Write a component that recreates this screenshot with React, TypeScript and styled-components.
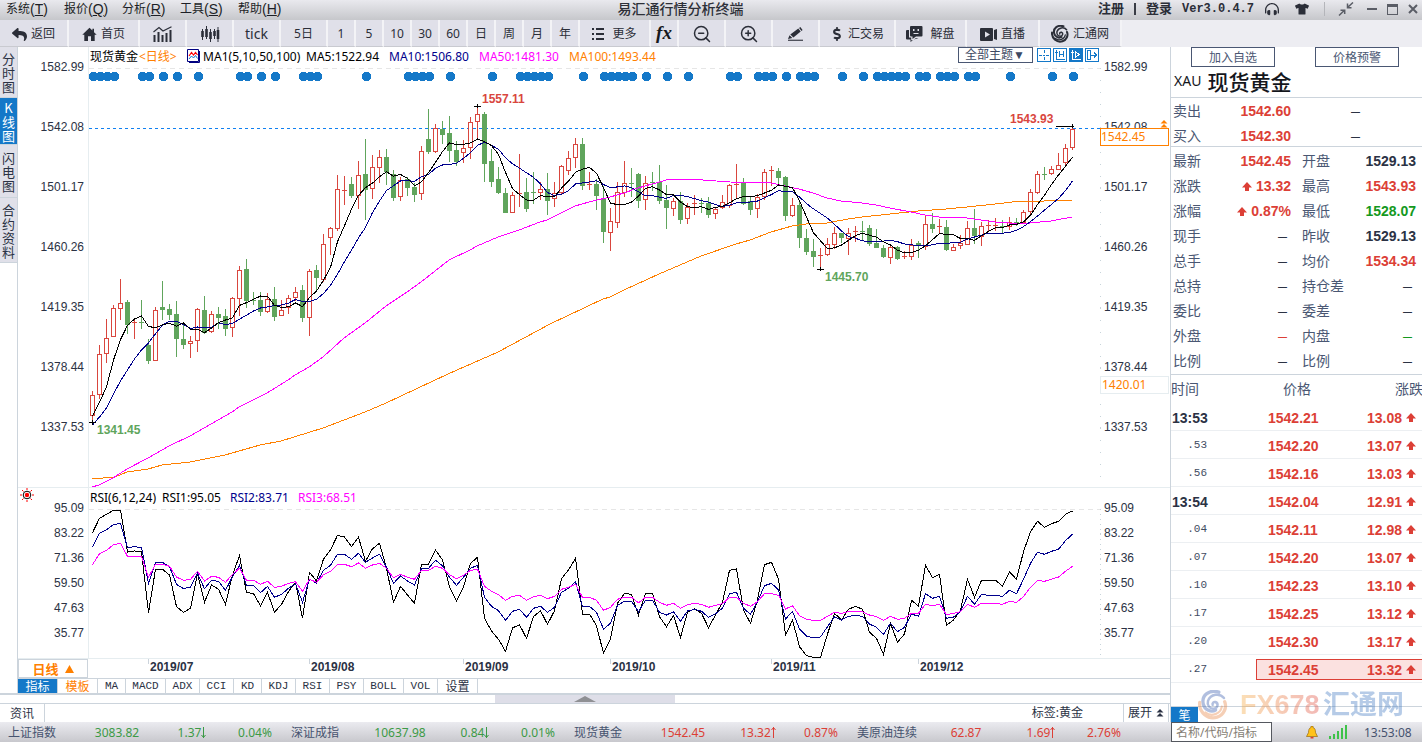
import React from 'react';
import styled, { createGlobalStyle } from 'styled-components';
import { ZoomIn, ZoomOut } from 'lucide-react';
import { FaReply, FaDollarSign, FaHeadphonesAlt, FaTshirt } from 'react-icons/fa';

const c = {
  ink: '#2b3244',
  label: '#4a5773',
  red: '#dc3f36',
  green: '#14991e',
  fall: '#3c9a46',
  blue: '#1478c8',
  orange: '#ff8000',
  line: '#ccd4dc',
  faint: '#e6edf0',
  navy: '#00008c',
  pink: '#ff00ff',
  up: '#d9463e',
  down: '#60a55c',
};

const ui = '"Noto Sans", "Noto Sans CJK SC", sans-serif';
const cjk = '"Noto Sans CJK SC", sans-serif';
const arial = '"Liberation Sans", Arial, "Noto Sans CJK SC", sans-serif';
const mono = '"Liberation Mono", "Noto Sans CJK SC", monospace';

const Global = createGlobalStyle`
  *, *::before, *::after { box-sizing: border-box; }
  body { margin: 0; background: #fff; color: ${c.ink}; font: 12px/16px ${ui}; }
  button, input, select { font: inherit; color: inherit; margin: 0; padding: 0; border: 0; background: none; border-radius: 0; }
  ul, h1, h2, dl, dd, dt { margin: 0; padding: 0; font-weight: inherit; font-size: inherit; list-style: none; }
  svg { display: block; flex: none; }
`;

/* ---------- shell ---------- */
const Shell = styled.div`
  display: flex;
  flex-direction: column;
  min-height: 100vh;
  overflow: hidden;
`;
const Body = styled.div`
  flex: 1;
  display: flex;
`;
const Left = styled.main`
  flex: 1;
  min-width: 0;
  display: flex;
  flex-direction: column;
`;

/* ---------- title bar ---------- */
const TitleBar = styled.header`
  height: 20px;
  padding-bottom: 2px;
  display: flex;
  align-items: center;
  background: linear-gradient(#e9e9ee, #c6c7cb);
`;
const Menu = styled.nav`
  display: flex;
  padding-left: 6px;
`;
const MenuButton = styled.button`
  width: 58px;
  height: 16px;
  display: flex;
  align-items: center;
  color: #1d1f26;
  font: 12px/16px ${arial};
  white-space: nowrap;
  &:last-child { width: 46px; }
`;
const Shortcut = styled.span`
  font-size: 14px;
`;
const Title = styled.h1`
  flex: 1;
  text-align: center;
  font: 500 14px/16px ${arial};
  color: #2d3038;
`;
const Account = styled.div`
  display: flex;
  align-items: center;
  padding-left: 21px;
  color: #2b2e38;
`;
const AccountButton = styled.button`
  font: bold 13px/16px ${arial};
`;
const Bar = styled.span`
  width: 2px;
  height: 12px;
  margin: 0 10px;
  background: #3a3d46;
`;
const Version = styled.span`
  width: 86px;
  padding-left: 10px;
  font: bold 12px/16px ${mono};
`;
const TitleIcon = styled.button<{ $w: number }>`
  width: ${(p) => p.$w}px;
  height: 16px;
  display: flex;
  align-items: center;
  justify-content: center;
`;
const TitleDivider = styled.span`
  width: 1px;
  height: 14px;
  margin: 0 6px;
  background: #b4b5ba;
`;

/* ---------- toolbar ---------- */
const Toolbar = styled.nav`
  height: 27px;
  display: flex;
  background: #ededf2;
`;
const Tool = styled.button<{ $w: number }>`
  width: ${(p) => p.$w}px;
  display: flex;
  align-items: center;
  justify-content: center;
  gap: 4px;
  padding-top: 2px;
  background: #e0e0e9;
  border-right: 2px solid #f3f3f6;
  border-bottom: 1px solid #c9cad0;
  color: #2b2e38;
  font: 12px/16px ${ui};
`;
const TickLabel = styled.span`
  font-size: 14px;
`;
const Formula = styled.i`
  padding-bottom: 2px;
  font: italic bold 19px/20px "Liberation Serif", serif;
  color: #16181d;
`;

/* ---------- side tabs ---------- */
const Work = styled.div`
  flex: 1;
  display: flex;
`;
const SideTabs = styled.nav`
  width: 18px;
  border-right: 1px solid ${c.line};
`;
const SideTab = styled.button<{ $active?: boolean; $pad: number }>`
  display: block;
  width: 17px;
  padding: ${(p) => p.$pad}px 2px ${(p) => p.$pad - 2}px;
  font: 13px/14px ${cjk};
  color: ${(p) => (p.$active ? '#fff' : c.ink)};
  background: ${(p) => (p.$active ? c.blue : '#e0e0e9')};
  border-bottom: 1px solid ${c.line};
`;
const Charts = styled.section`
  flex: 1;
  min-width: 0;
`;

/* ---------- chart panels ---------- */
const Panel = styled.div<{ $h: number }>`
  display: grid;
  grid-template-columns: 70px minmax(0, 1fr) 69px;
  height: ${(p) => p.$h}px;
  border-bottom: 1px solid ${c.faint};
`;
const Plot = styled.div`
  min-width: 0;
  overflow: hidden;
  border-left: 1px solid ${c.faint};
`;
const Legend = styled.div`
  height: 18px;
  display: flex;
  align-items: center;
  padding-left: 1px;
  white-space: nowrap;
  color: #000;
`;
const LegendItem = styled.span<{ $w?: number; $color?: string }>`
  width: ${(p) => (p.$w ? p.$w + 'px' : 'auto')};
  padding-top: 2px;
  color: ${(p) => p.$color || '#000'};
`;
const LegendTools = styled.div`
  margin-left: auto;
  padding-right: 2px;
  align-self: flex-start;
  display: flex;
  align-items: center;
  gap: 2px;
`;
const ThemeSelect = styled.select`
  appearance: none;
  width: 75px;
  height: 16px;
  margin-right: 2px;
  padding-left: 6px;
  border: 1px solid #4a5773;
  color: #3d4963;
  font: 12px/14px ${arial};
`;
const MiniButton = styled.button<{ $on?: boolean }>`
  width: 14px;
  height: 14px;
  border: 1px solid ${c.blue};
  background: ${(p) => (p.$on ? c.blue : '#fff')};
  color: ${(p) => (p.$on ? '#fff' : c.blue)};
`;
const AxisColumn = styled.div`
  position: relative;
`;
const PriceAxis = styled.ul<{ $right?: boolean }>`
  padding: 10px 4px 0 3px;
  display: flex;
  flex-direction: column;
  gap: 40px;
  font: 12px/20px ${arial};
  text-align: ${(p) => (p.$right ? 'left' : 'right')};
`;
const RsiAxis = styled.ul<{ $right?: boolean }>`
  padding: ${(p) => (p.$right ? 14 : 0)}px 4px 0 3px;
  display: flex;
  flex-direction: column;
  gap: 13px;
  font: 12px/12px ${arial};
  text-align: ${(p) => (p.$right ? 'left' : 'right')};
`;
const AlertIcon = styled.button`
  display: flex;
  height: 14px;
  padding-left: 2px;
`;
const PriceTag = styled.output<{ $top: number; $strong?: boolean }>`
  position: absolute;
  left: -1px;
  right: 1px;
  top: ${(p) => p.$top}px;
  height: 18px;
  padding-left: ${(p) => (p.$strong ? 0 : 1)}px;
  line-height: 16px;
  color: ${c.orange};
  background: #fff;
  border: 1px solid ${(p) => (p.$strong ? c.orange : c.faint)};
`;
const RiseMark = styled.span`
  position: absolute;
  right: 2px;
  top: 73px;
`;

/* ---------- date axis and indicator tabs ---------- */
const DateRow = styled.div`
  display: flex;
  height: 19px;
`;
const PeriodButton = styled.button`
  width: 70px;
  display: flex;
  align-items: center;
  justify-content: center;
  gap: 6px;
  border: 1px solid ${c.line};
  color: ${c.orange};
  font: bold 13px/17px ${cjk};
`;
const Indicators = styled.nav`
  display: flex;
  height: 15px;
  border-top: 1px solid ${c.line};
`;
const Indicator = styled.button<{ $w: number; $tone?: 'on' | 'hot' }>`
  width: ${(p) => p.$w}px;
  border-right: 1px solid ${c.line};
  font: 11px/14px ${mono};
  color: ${(p) => (p.$tone === 'on' ? '#fff' : p.$tone === 'hot' ? c.orange : c.ink)};
  background: ${(p) => (p.$tone === 'on' ? c.blue : '#fff')};
`;
const Han = styled.span`
  font: 12px/14px ${cjk};
`;

/* ---------- splitter and news row ---------- */
const Splitter = styled.div`
  height: 11px;
  border-top: 2px solid ${c.line};
  border-bottom: 1px solid ${c.line};
  display: flex;
  justify-content: center;
`;
const Handle = styled.button`
  width: 180px;
  display: flex;
  justify-content: center;
  align-items: center;
  background: #dedee8;
`;
const News = styled.div`
  height: 18px;
  display: flex;
  align-items: stretch;
`;
const NewsTab = styled.button`
  width: 45px;
  border-right: 1px solid ${c.line};
  font: 12px/16px ${cjk};
`;
const NewsTag = styled.span`
  margin-left: auto;
  padding-right: 40px;
  line-height: 18px;
`;
const Expand = styled.button`
  width: 46px;
  margin-right: 1px;
  display: flex;
  align-items: center;
  justify-content: center;
  gap: 4px;
  border-left: 1px solid ${c.line};
  border-right: 1px solid ${c.line};
`;

/* ---------- quote panel ---------- */
const Quote = styled.aside`
  position: relative;
  width: 252px;
  display: flex;
  flex-direction: column;
  overflow-x: clip;
  border-left: 1px solid ${c.line};
`;
const QuoteActions = styled.div`
  display: flex;
  gap: 40px;
  padding-left: 20px;
`;
const QuoteAction = styled.button`
  width: 84px;
  height: 20px;
  border: 1px solid ${c.label};
  color: ${c.label};
  font: 12px/16px ${cjk};
`;
const Instrument = styled.h2`
  height: 31px;
  display: flex;
  align-items: center;
  gap: 6px;
  padding: 0 0 2px 3px;
  border-bottom: 1px solid ${c.line};
  color: #14161c;
  font: 14px/28px ${ui};
`;
const InstrumentName = styled.span`
  font: 500 21px/28px ${cjk};
`;
const Facts = styled.dl<{ $h: number; $pad: number }>`
  height: ${(p) => p.$h}px;
  padding-top: ${(p) => p.$pad}px;
  border-bottom: 1px solid ${c.line};
`;
const FactRow = styled.div`
  display: grid;
  grid-template-columns: 45px 73px 42px 1fr;
  height: 25px;
  padding: 0 6px 0 2px;
  align-items: center;
  font: 14px/25px ${cjk};
  color: ${c.label};
`;
const FactLabel = styled.dt<{ $second?: boolean }>`
  padding-left: ${(p) => (p.$second ? 11 : 0)}px;
  white-space: nowrap;
`;
const FactValue = styled.dd<{ $color?: string }>`
  display: flex;
  align-items: center;
  justify-content: flex-end;
  gap: 4px;
  padding-top: 2px;
  color: ${(p) => p.$color || c.ink};
  font: bold 14px/23px ${arial};
`;
const Dash = styled.span`
  padding-right: 4px;
  font: bold 9px/20px ${arial};
`;
const MidDash = styled(FactValue)`
  grid-column: 4;
  padding-right: 52px;
`;

const Ticks = styled.table`
  width: 251px;
  table-layout: fixed;
  border-collapse: separate;
  border-spacing: 0;
`;
const TickHead = styled.th<{ $w: number; $pad: number }>`
  width: ${(p) => p.$w}px;
  height: 28px;
  padding: 0 0 2px ${(p) => p.$pad}px;
  font: 14px/26px ${cjk};
  color: ${c.label};
  text-align: left;
  white-space: nowrap;
`;
const TickCell = styled.td`
  height: 28px;
  padding: 0;
  border-bottom: 1px solid #eceff2;
`;
const TickTime = styled.span<{ $main: boolean }>`
  display: block;
  width: 36px;
  padding-left: 1px;
  margin-top: ${(p) => (p.$main ? 2 : 0)}px;
  font: ${(p) => (p.$main ? `bold 14px/20px ${arial}` : `11px/24px ${mono}`)};
  text-align: ${(p) => (p.$main ? 'left' : 'right')};
  color: ${(p) => (p.$main ? c.ink : '#3f4c62')};
`;
const TickValue = styled.span<{ $hot?: boolean; $side: 'l' | 'r' }>`
  display: flex;
  align-items: center;
  justify-content: ${(p) => (p.$side === 'l' ? 'flex-start' : 'flex-end')};
  gap: 4px;
  height: 21px;
  margin-top: 1px;
  padding: ${(p) => (p.$side === 'l' ? '2px 0 0 11px' : '2px 6px 0 0')};
  border: solid ${(p) => (p.$hot ? c.red : 'transparent')};
  border-width: 1px 0 1px ${(p) => (p.$side === 'l' ? 1 : 0)}px;
  background: ${(p) => (p.$hot ? '#fbe1e0' : 'transparent')};
  color: ${c.red};
  font: bold 14px/18px ${arial};
`;
const QuoteFoot = styled.div`
  height: 16px;
  margin-top: auto;
  border-top: 1px solid ${c.line};
`;
const PenTab = styled.button`
  display: block;
  width: 27px;
  height: 15px;
  background: ${c.blue};
  color: #fff;
  font: 12px/15px ${cjk};
`;
const Watermark = styled.div`
  position: absolute;
  left: 27px;
  bottom: 1px;
  display: flex;
  align-items: center;
  height: 32px;
  opacity: 0.4;
`;
const MarkLatin = styled.span`
  width: 83px;
  margin-left: 12px;
  font: bold 27px/32px ${arial};
  color: transparent;
  background: linear-gradient(90deg, #f7b04a, #e0504a);
  background-clip: text;
`;
const MarkHan = styled.span`
  font: bold 27px/32px ${arial};
  color: #4a80c4;
`;

/* ---------- status bar ---------- */
const Status = styled.footer`
  height: 20px;
  display: flex;
  align-items: center;
  padding-left: 8px;
  background: linear-gradient(#ebebf0, #c8c8cd);
`;
const Index = styled.div`
  display: grid;
  grid-template-columns: 70px 78px 72px 54px;
  width: 283px;
  padding-top: 1px;
  white-space: nowrap;
`;
const IndexName = styled.span`
  color: #46536f;
`;
const IndexValue = styled.span<{ $up: boolean }>`
  display: flex;
  align-items: center;
  justify-content: center;
  color: ${(p) => (p.$up ? c.red : c.fall)};
`;
const Search = styled.input`
  width: 101px;
  height: 20px;
  margin-left: auto;
  padding: 0 4px;
  background: #fff;
  border: 1px solid #55585f;
  &::placeholder { color: #857e74; opacity: 1; }
`;
const StatusTail = styled.div`
  width: 150px;
  display: flex;
  align-items: center;
  padding-left: 34px;
`;
const Clock = styled.time`
  margin-left: 17px;
  padding-top: 1px;
  color: #46536f;
`;
const Signal = styled.span`
  margin-left: 11px;
`;

/* ---------- icons ---------- */
const UpArrow = () => (
  <svg width="10" height="10" viewBox="0 0 10 10">
    <path d="M5 0 10 5.4H7V9H3V5.4H0Z" fill={c.red} />
  </svg>
);
const HomeIcon = () => (
  <svg width="15" height="15" viewBox="0 0 15 15" fill="#2b2e38">
    <path d="M7.500.8.3 7.800H2.300V14H6V9.300H9V14H12.700V7.800H14.700L12 5.200V1.800H10.400V3.600Z" />
  </svg>
);
const TrendIcon = () => (
  <svg width="20" height="17" viewBox="0 0 20 17">
    <path d="M1.500 16V9M5.500 16V6M9.500 16V9M13.500 16V7M17.500 16V4" stroke="#2b2e38" strokeWidth="2" />
    <path d="M0.500 6 6 1.500 10 5 18.500.8" fill="none" stroke="#2b2e38" strokeWidth="1.200" />
  </svg>
);
const CandleIcon = () => (
  <svg width="20" height="17" viewBox="0 0 20 17" stroke="#2b2e38">
    <path d="M2.500 3V14M6.500 0V13M10.500 3V16M14.500 3V13M18 1V16" strokeWidth="1" />
    <path d="M2.500 5V11M6.500 3V11M10.500 6V13M14.500 5V10M18 4V13" strokeWidth="2.600" />
  </svg>
);
const MoreIcon = () => (
  <svg width="13" height="12" viewBox="0 0 13 12" fill="#2b2e38">
    <path d="M0 0H2V2H0ZM4 0H12V2H4ZM0 5H2V7H0ZM4 5H12V7H4ZM0 10H2V12H0ZM4 10H12V12H4Z" />
  </svg>
);
const PencilIcon = () => (
  <svg width="17" height="15" viewBox="0 0 17 15" fill="#2b2e38">
    <path d="M1 12 2.500 8.300 5.400 11ZM3.300 7.600 11.300 1.500 13.700 4.500 6.400 10.500ZM12.100.9 13.300.1 15.600 3 14.500 3.900Z" />
    <path d="M1 12.700H16V13.800H1Z" />
  </svg>
);
const ChatIcon = () => (
  <svg width="17" height="16" viewBox="0 0 17 16" fill="#2b2e38">
    <path d="M5 0H15.500Q16.500 0 16.500 1V9.500Q16.500 10.500 15.500 10.500H10L6.500 13V10.500H5Q4 10.500 4 9.500V1Q4 0 5 0Z" />
    <path d="M1 4H3V11.500H5.200V14.200H7L10 12H12.500L8 13.500 4.500 16V13.500H1Q0 13.500 0 12.500V5Q0 4 1 4Z" />
    <path d="M7 3H8.500V5H7ZM11.500 3H13V5H11.500ZM7.500 7H12.500V8H7.500Z" fill="#e0e0e9" />
  </svg>
);
const LiveIcon = () => (
  <svg width="17" height="13" viewBox="0 0 17 13">
    <path d="M1 0H12Q13 0 13 1V12Q13 13 12 13H1Q0 13 0 12V1Q0 0 1 0ZM14 2 17 1V12L14 11Z" fill="#2b2e38" />
    <path d="M5 3.500 10 6.500 5 9.500Z" fill="#e0e0e9" />
  </svg>
);
const SwirlIcon = ({ size = 18, a = '#2b2e38', b = '#2b2e38' }: { size?: number; a?: string; b?: string }) => (
  <svg width={size} height={size} viewBox="0 0 18 18" fill="none" strokeLinecap="round">
    <path d="M12.500 1.300C7 -.5 1.800 3 3.200 8.600 4 12 8 13.600 10.500 12" stroke={b} strokeWidth="2" />
    <path d="M1 7.500C.5 13.500 6 18 11.500 16.300 15.500 15 17.500 10.500 16 7" stroke={a} strokeWidth="2" />
    <path d="M15.600 4.800C13 1.500 7.500 2.500 6 6.500 5.300 9 7 11.300 9.300 11.300 12 11 12.500 8 10.500 7.200 9.400 6.900 8.400 7.800 8.800 8.900" stroke={b} strokeWidth="1.500" />
    <path d="M4.500 13.500C8 16.300 13.500 14.500 14.300 10" stroke={a} strokeWidth="1.300" />
  </svg>
);
const ShrinkIcon = () => (
  <svg width="16" height="14" viewBox="0 0 16 14" fill="none" stroke="#5a5d66" strokeWidth="1.500">
    <path d="M15 .5 9.500 5.500M9.500 1.500V5.700H13.500M1 13.500 6.500 8.300M2.500 8.200H6.700V12" />
  </svg>
);
const ChartBadge = () => (
  <svg width="13" height="14" viewBox="0 0 13 14" fill="none">
    <path d="M.5.500H11.500V12.500H.5Z" fill="#fff" stroke="#000080" />
    <path d="M12.500 2V13.500H2" stroke="#000080" />
    <path d="M2 7 4.500 3.500 6.500 6 8.500 3.500 10.500 6" stroke="#f00" strokeWidth="1.200" />
    <path d="M2 10 4.500 7 6.500 9 8.500 6.500 10.500 9.500" stroke="#1478c8" />
  </svg>
);
const SunIcon = () => (
  <svg width="14" height="14" viewBox="0 0 14 14">
    <circle cx="7" cy="7" r="3.800" fill="#fff" stroke="#000" strokeWidth="1" />
    <circle cx="7" cy="7" r="2.200" fill="#f00" />
    <path d="M7 0V2M7 12V14M0 7H2M12 7H14M2 2 3.500 3.500M10.500 10.500 12 12M12 2 10.500 3.500M2 12 3.500 10.500" stroke="#f00" />
  </svg>
);
const DoubleUp = ({ color }: { color: string }) => (
  <svg width="8" height="8" viewBox="0 0 8 8" fill={color}>
    <path d="M4 0 7.500 3.500H.5ZM4 4 7.500 7.500H.5Z" />
  </svg>
);
const Mini = ({ d }: { d: string }) => (
  <svg width="12" height="12" viewBox="0 0 12 12" fill="none" stroke="currentColor" shapeRendering="crispEdges">
    <path d={d} />
  </svg>
);
const Bell = () => (
  <svg width="12" height="13" viewBox="0 0 12 13">
    <path d="M5 0H7V1.500C9 2 9.500 4 9.500 6.500L11.500 10.500H.5L2.500 6.500C2.500 4 3 2 5 1.500Z" fill="#ffc21a" stroke="#8a5a00" strokeWidth=".600" />
    <path d="M4.500 11H7.500V12.500H4.500Z" fill="#e0402a" />
  </svg>
);
const Bars = () => (
  <svg width="18" height="14" viewBox="0 0 18 14" fill="#3fc24a">
    <path d="M0 11H2V14H0ZM4 9H6V14H4ZM8 6H10V14H8ZM12 3H14V14H12ZM16 0H18V14H16Z" />
  </svg>
);

/* ---------- market data ---------- */
// Each candle: rising flag, then high, body top, body bottom and low on the plot's vertical scale.
const candles: number[][] = [
  [1,391,395,415,420],[1,345,354,394,398],[1,319,338,353,362],[1,305,308,336,336],[1,279,303,308,319],
  [0,300,302,324,333],[1,318,322,323,338],[0,300,322,323,328],[0,339,345,360,363],[1,307,310,360,360],
  [0,281,307,309,319],[0,304,309,314,319],[0,301,314,338,356],[0,323,339,344,348],[1,336,341,343,357],
  [1,308,309,340,351],[0,296,310,332,333],[1,311,314,331,332],[0,307,314,317,328],[0,309,316,328,335],
  [1,297,298,327,336],[1,266,270,298,315],[0,259,269,300,307],[0,292,300,301,304],[0,292,300,311,315],
  [1,293,299,311,312],[0,287,299,316,320],[1,300,310,315,315],[1,295,298,307,313],[1,287,292,297,300],
  [0,285,290,317,321],[1,269,271,317,335],[0,265,270,277,291],[1,234,244,279,281],[1,227,228,237,254],
  [1,175,189,228,230],[1,176,190,191,204],[0,177,184,195,197],[1,161,175,195,208],[0,139,174,189,219],
  [1,155,167,188,198],[1,150,157,167,182],[0,149,157,171,184],[0,170,174,197,200],[1,177,180,196,200],
  [0,177,179,187,195],[0,183,187,194,201],[1,146,151,193,199],[0,109,139,151,153],[1,124,128,151,152],
  [0,121,129,134,143],[0,116,133,150,161],[0,141,150,161,165],[1,140,148,152,162],[1,117,122,147,158],
  [1,107,114,121,138],[0,112,114,163,181],[0,149,161,181,186],[0,167,179,192,193],[0,188,193,212,212],
  [1,192,195,212,212],[1,154,193,194,206],[0,178,192,208,211],[0,172,192,193,203],[1,182,189,192,199],
  [0,173,189,200,214],[1,182,193,198,206],[1,165,166,192,194],[1,151,158,170,174],[1,138,144,157,167],
  [0,138,144,185,189],[1,172,184,185,189],[0,179,184,195,209],[0,186,198,231,242],[1,208,221,232,250],
  [1,182,192,222,227],[1,161,183,192,196],[0,168,183,184,196],[0,173,174,200,207],[1,176,183,199,209],
  [0,172,182,183,190],[0,165,182,200,203],[0,185,200,207,228],[1,198,201,208,215],[0,192,201,219,223],
  [1,203,207,218,223],[1,195,203,204,214],[0,198,203,204,212],[0,197,203,214,217],[1,207,209,213,218],
  [1,195,202,207,208],[1,184,185,205,207],[1,164,184,185,197],[0,178,183,203,204],[0,197,201,209,214],
  [1,194,197,208,217],[1,169,172,196,199],[1,166,170,171,185],[0,168,171,177,183],[0,176,177,215,220],
  [1,198,205,215,216],[0,201,205,237,247],[0,229,238,251,254],[0,239,251,256,266],[1,248,255,256,269],
  [1,238,244,254,255],[1,227,233,244,248],[0,233,233,237,242],[1,228,233,238,254],[1,226,231,232,241],
  [0,221,231,232,240],[0,225,228,243,245],[0,229,243,247,247],[0,245,248,256,257],[1,245,247,257,263],
  [0,246,247,258,259],[1,251,256,257,258],[1,239,245,256,259],[0,241,243,245,257],[1,216,224,246,249],
  [0,213,224,228,232],[1,219,226,227,232],[0,220,227,249,250],[1,244,247,250,250],[1,235,243,245,248],
  [1,221,228,244,244],[0,209,228,235,243],[1,222,226,236,245],[1,220,225,226,230],[1,218,225,226,230],
  [0,220,226,227,232],[1,217,222,226,229],[0,218,222,223,225],[1,210,212,222,223],[1,189,192,211,213],
  [1,171,174,192,193],[0,167,174,175,179],[1,166,169,173,174],[1,153,165,169,169],[1,144,148,162,165],
  [1,127,129,147,149],
];

const xAt = (i: number) => 92 + 7 * i;
const closes = candles.map((k) => (k[0] ? k[2] : k[3]));
const average = (n: number, lead: number[]) =>
  closes.map((_, i) =>
    i < lead.length ? lead[i] : closes.slice(i - n + 1, i + 1).reduce((s, v) => s + v, 0) / n,
  );
const ma5 = average(5, [416, 402, 387, 360]);
const ma10 = average(10, [425, 417, 408, 394, 381, 370, 359, 350, 343]);

const ma50 =
  '92,487 99,485 113,478 127,469 148,458 169,446 190,436 211,424 232,412 239,407 267,393 288,380 295,375 309,367 323,357 344,338 365,323 386,306 407,292 421,282 449,260 470,250 477,246 498,237 519,230 540,222 547,220 561,213 575,206 589,202 610,197 624,193 638,188 652,184 670,179 689,179 730,182 771,183 785,186 799,189 813,193 827,198 841,201 862,203 876,205 890,208 911,212 925,215 939,217 967,218 981,220 995,222 1009,223 1030,223 1051,221 1072,217';
const ma100 =
  '92,479 115,477 127,472 148,469 162,465 190,462 225,455 260,445 281,441 323,428 344,420 365,412 386,403 448,374 498,352 550,324 603,299 610,297 624,290 659,274 701,256 736,244 750,240 771,232 792,226 806,224 827,223 848,219 862,217 890,214 918,211 946,209 967,207 995,204 1021,201 1044,201 1072,200';

const events = [
  0,1,2,3,7,8,10,12,15,21,22,24,26,30,31,32,39,45,46,47,48,51,57,61,62,63,64,65,70,73,74,75,76,77,79,82,85,
  91,92,95,96,97,99,101,102,103,107,110,112,113,114,115,116,118,119,121,122,123,125,126,131,137,140,
];

// RSI samples count downwards from the top of the panel, three units to a pixel.
const rsi1 = [
  158,115,103,91,91,216,213,216,398,268,268,285,380,397,385,282,367,315,328,373,285,227,337,341,377,337,397,373,335,307,
  415,277,303,237,210,166,171,200,172,244,206,190,265,367,319,345,370,253,253,210,240,320,363,320,250,232,415,453,478,514,
  444,434,475,410,392,433,392,296,270,235,402,402,437,520,477,370,340,343,405,340,340,410,440,407,472,397,386,400,443,405,
  367,271,267,390,430,360,254,247,297,466,420,500,527,532,532,462,400,420,388,379,388,457,475,523,430,487,462,361,378,256,
  293,283,436,420,390,298,352,301,301,301,318,276,298,215,155,124,142,131,124,103,93,
];
const rsi2 = [
  200,160,149,134,130,203,200,203,310,247,247,260,313,326,321,280,326,301,304,331,290,256,316,316,338,319,352,343,325,312,
  367,298,309,271,256,223,223,238,220,247,234,223,262,310,288,303,315,265,265,241,257,292,316,292,265,256,352,379,392,421,
  394,388,412,385,379,397,382,337,325,305,379,379,397,447,430,376,364,364,395,361,361,397,405,395,424,393,388,394,412,401,
  385,341,337,385,403,365,317,310,330,417,394,447,468,474,471,440,410,420,409,406,409,432,442,463,430,455,442,402,409,341,
  355,349,415,411,395,349,373,343,346,346,349,331,341,298,250,217,223,214,208,182,162,
];
const rsi3 = [
  254,221,211,194,190,229,229,229,292,253,253,259,291,301,298,274,303,289,292,307,283,265,301,301,313,304,322,319,310,305,
  334,298,307,284,274,253,253,260,249,265,255,250,265,293,283,292,298,271,271,259,265,284,296,286,271,268,319,334,344,361,
  349,346,361,350,346,356,349,328,322,313,352,352,361,391,382,358,352,352,368,352,352,367,376,370,385,374,370,373,382,376,
  371,352,352,370,379,365,341,341,346,387,377,407,418,421,421,409,397,400,395,395,395,405,410,421,409,418,415,400,400,373,
  377,373,404,400,395,373,382,370,370,370,373,364,367,350,322,301,304,298,291,274,259,
];

const toPoints = (ys: number[]) => ys.map((y, i) => `${xAt(i) + 0.5},${y.toFixed(1)}`).join(' ');
const rsiPoints = (ys: number[]) => toPoints(ys.map((v) => 480 + v / 3));

const prices = ['1582.99', '1542.08', '1501.17', '1460.26', '1419.35', '1378.44', '1337.53'];
const levels = ['95.09', '83.22', '71.36', '59.50', '47.63', '35.77'];
const months: [string, number][] = [
  ['2019/07', 148], ['2019/08', 309], ['2019/09', 463], ['2019/10', 610], ['2019/11', 771], ['2019/12', 918],
];

const indicators: [string, number][] = [
  ['MA', 28], ['MACD', 40], ['ADX', 34], ['CCI', 34], ['KD', 28], ['KDJ', 34], ['RSI', 34], ['PSY', 34], ['BOLL', 40], ['VOL', 34],
];

type Fact = [string, string, string?];
const facts: [Fact, Fact][] = [
  [['最新', '1542.45', c.red], ['开盘', '1529.13']],
  [['涨跌', '^13.32', c.red], ['最高', '1543.93', c.red]],
  [['涨幅', '^0.87%', c.red], ['最低', '1528.07', c.green]],
  [['现手', '—'], ['昨收', '1529.13']],
  [['总手', '—'], ['均价', '1534.34', c.red]],
  [['总持', '—'], ['持仓差', '—']],
  [['委比', '—'], ['委差', '—']],
  [['外盘', '—', c.red], ['内盘', '—', c.green]],
  [['比例', '—'], ['比例', '—']],
];

const ticks: [string, string, string][] = [
  ['13:53', '1542.21', '13.08'], ['.53', '1542.20', '13.07'], ['.56', '1542.16', '13.03'],
  ['13:54', '1542.04', '12.91'], ['.04', '1542.11', '12.98'], ['.07', '1542.20', '13.07'],
  ['.10', '1542.23', '13.10'], ['.17', '1542.25', '13.12'], ['.20', '1542.30', '13.17'],
  ['.27', '1542.45', '13.32'],
];

const indices: [string, string, string, string, boolean][] = [
  ['上证指数', '3083.82', '1.37', '0.04%', false],
  ['深证成指', '10637.98', '0.84', '0.01%', false],
  ['现货黄金', '1542.45', '13.32', '0.87%', true],
  ['美原油连续', '62.87', '1.69', '2.76%', true],
];

/* ---------- charts ---------- */
const Candle = ({ k, i }: { k: number[]; i: number }) => {
  const [rising, high, top, bottom, low] = k;
  const x = xAt(i);
  const color = rising ? c.up : c.down;
  const flat = bottom - top <= 1;
  return (
    <g>
      <rect x={x} y={high} width="1" height={low - high + 1} fill={color} />
      {flat || !rising ? (
        <rect x={x - 2} y={top} width="5" height={flat ? 1 : bottom - top + 1} fill={color} />
      ) : (
        <rect x={x - 1.5} y={top + 0.5} width="4" height={bottom - top} fill="#fff" stroke={color} />
      )}
    </g>
  );
};

const Ruler = ({ from, to, step, major }: { from: number; to: number; step: number; major: number[] }) => {
  const minor: number[] = [];
  for (let y = from; y < to; y += step) minor.push(y);
  return (
    <g fill="#c8d4da">
      {minor.map((y) => <rect key={y} x="1100" y={y} width="1" height="1" />)}
      {major.map((y) => <rect key={'m' + y} x="1100" y={y} width="3" height="1" />)}
    </g>
  );
};

const PricePlot = () => (
  <svg width="1012" height="422" viewBox="89 65 1012 422" shapeRendering="crispEdges">
    <path d="M89 68.500H1100" stroke="#e6e6e6" strokeDasharray="5 4" />
    <path d="M89 128.500H1100" stroke="#1080f0" strokeDasharray="3 3" />
    <Ruler from={68} to={480} step={12} major={[127, 187, 247, 307, 367, 427]} />
    <g fill={c.blue}>
      {events.map((i) => (
        <path key={i} d={`M${xAt(i) - 1} 72h5v1h1v1h1v5h-1v1h-1v1h-5v-1h-1v-1h-1v-5h1v-1h1z`} />
      ))}
    </g>
    {candles.map((k, i) => <Candle key={i} k={k} i={i} />)}
    <g fill="none" strokeWidth="1">
      <polyline points={ma100} stroke={c.orange} />
      <polyline points={ma50} stroke={c.pink} />
      <polyline points={toPoints(ma10)} stroke={c.navy} />
      <polyline points={toPoints(ma5)} stroke="#000" />
    </g>
    <path d="M474 106.500H481M477.500 104V108M89 422.500H96M92.500 420V425M817 269.500H824M820.500 267V271M1056 126.500H1074M1072.500 124V128" stroke="#000" />
    <g fontFamily="Liberation Sans, Arial, sans-serif" fontSize="12" fontWeight="bold">
      <text x="482" y="103" fill={c.up}>1557.11</text>
      <text x="1010" y="123" fill={c.up}>1543.93</text>
      <text x="97" y="434" fill={c.down}>1341.45</text>
      <text x="825" y="281" fill={c.down}>1445.70</text>
    </g>
  </svg>
);

const RsiPlot = () => (
  <svg width="1012" height="152" viewBox="89 506 1012 152" shapeRendering="crispEdges">
    <path d="M89 509.500H1100" stroke="#e6e6e6" strokeDasharray="5 4" />
    <Ruler from={509} to={656} step={5} major={[533, 558, 583, 608, 633]} />
    <g fill="none">
      <polyline points={rsiPoints(rsi1)} stroke="#000" />
      <polyline points={rsiPoints(rsi2)} stroke={c.navy} />
      <polyline points={rsiPoints(rsi3)} stroke={c.pink} />
    </g>
  </svg>
);

const DateAxis = () => (
  <svg width="1082" height="19" viewBox="88 659 1082 19" fontFamily="Liberation Sans, Arial, sans-serif" fontSize="12" fontWeight="bold" fill={c.ink}>
    {months.map(([label, x]) => (
      <g key={label}>
        <rect x={x} y="659" width="1" height="5" fill={c.line} />
        <text x={x + 2} y="671">{label}</text>
      </g>
    ))}
  </svg>
);

const Trend = ({ up }: { up: boolean }) => (
  <svg width="5" height="11" viewBox="0 0 5 11" fill="none" stroke="currentColor">
    <path d={up ? 'M2.500 0V11M.5 3 2.500.5 4.500 3' : 'M2.500 0V11M.5 8 2.500 10.500 4.500 8'} />
  </svg>
);

const Value = ({ text }: { text: string }) => {
  if (text === '—') return <Dash>—</Dash>;
  if (text.startsWith('^')) return <><UpArrow />{text.slice(1)}</>;
  return <>{text}</>;
};

export default function App() {
  return (
    <Shell>
      <Global />
      <TitleBar>
        <Menu>
          {[['系统', 'T'], ['报价', 'Q'], ['分析', 'R'], ['工具', 'S'], ['帮助', 'H']].map(([name, key]) => (
            <MenuButton key={key}>{name}<Shortcut>(<u>{key}</u>)</Shortcut></MenuButton>
          ))}
        </Menu>
        <Title>易汇通行情分析终端</Title>
        <Account>
          <AccountButton>注册</AccountButton>
          <Bar />
          <AccountButton>登录</AccountButton>
          <Version>Ver3.0.4.7</Version>
          <TitleIcon $w={28} aria-label="客服"><FaHeadphonesAlt size={14} /></TitleIcon>
          <TitleIcon $w={32} aria-label="皮肤"><FaTshirt size={14} /></TitleIcon>
          <TitleDivider />
          <TitleIcon $w={30} aria-label="收起"><ShrinkIcon /></TitleIcon>
          <TitleIcon $w={21} aria-label="最小化">
            <svg width="10" height="12" viewBox="0 0 10 12"><path d="M0 5H10V7H0Z" fill="#5a5d66" /></svg>
          </TitleIcon>
          <TitleIcon $w={21} aria-label="最大化">
            <svg width="11" height="11" viewBox="0 0 11 11"><path d="M0 0H11V11H0ZM1 3V10H10V3Z" fill="#5a5d66" fillRule="evenodd" /></svg>
          </TitleIcon>
          <TitleIcon $w={19} aria-label="关闭">
            <svg width="10" height="10" viewBox="0 0 10 10"><path d="M1 1 9 9M9 1 1 9" stroke="#5a5d66" strokeWidth="2" /></svg>
          </TitleIcon>
        </Account>
      </TitleBar>

      <Toolbar>
        <Tool $w={69}><FaReply size={15} />返回</Tool>
        <Tool $w={71}><HomeIcon />首页</Tool>
        <Tool $w={47} aria-label="走势"><TrendIcon /></Tool>
        <Tool $w={47} aria-label="K线"><CandleIcon /></Tool>
        <Tool $w={47}><TickLabel>tick</TickLabel></Tool>
        <Tool $w={47}>5日</Tool>
        {['1', '5', '10', '30', '60', '日', '周', '月', '年'].map((t) => <Tool key={t} $w={28}>{t}</Tool>)}
        <Tool $w={71}><MoreIcon />&nbsp;更多</Tool>
        <Tool $w={28}><Formula>fx</Formula></Tool>
        <Tool $w={47} aria-label="缩小"><ZoomOut size={20} strokeWidth={1.8} /></Tool>
        <Tool $w={47} aria-label="放大"><ZoomIn size={20} strokeWidth={1.8} /></Tool>
        <Tool $w={47} aria-label="画线"><PencilIcon /></Tool>
        <Tool $w={76}><FaDollarSign size={14} />汇交易</Tool>
        <Tool $w={71}><ChatIcon />&nbsp;解盘</Tool>
        <Tool $w={73}><LiveIcon />直播</Tool>
        <Tool $w={82}><SwirlIcon />汇通网</Tool>
      </Toolbar>

      <Body>
        <Left>
          <Work>
            <SideTabs>
              <SideTab $pad={5}>分时图</SideTab>
              <SideTab $pad={3} $active>K线图</SideTab>
              <SideTab $pad={6}>闪电图</SideTab>
              <SideTab $pad={5}>合约资料</SideTab>
            </SideTabs>
            <Charts>
              <Panel $h={441}>
                <AxisColumn>
                  <PriceAxis>{prices.map((p) => <li key={p}>{p}</li>)}</PriceAxis>
                </AxisColumn>
                <Plot>
                  <Legend>
                    <LegendItem $w={49}>现货黄金</LegendItem>
                    <LegendItem $w={48} $color={c.orange}>&lt;日线&gt;</LegendItem>
                    <ChartBadge />
                    <LegendItem $w={106}>&nbsp;MA1(5,10,50,100)</LegendItem>
                    <LegendItem $w={83}>MA5:1522.94</LegendItem>
                    <LegendItem $w={90} $color={c.navy}>MA10:1506.80</LegendItem>
                    <LegendItem $w={90} $color={c.pink}>MA50:1481.30</LegendItem>
                    <LegendItem $color={c.orange}>MA100:1493.44</LegendItem>
                    <LegendTools>
                      <ThemeSelect aria-label="主题"><option>全部主题▼</option></ThemeSelect>
                      <MiniButton aria-label="十字光标"><Mini d="M6 1V4M6 8V11M1 6H4M8 6H11M5 6H7" /></MiniButton>
                      <MiniButton aria-label="纵轴"><Mini d="M2.500 1V10.500H11M5.500 2V8M9.500 2V8M5.500 5H9.500M1 3H4" /></MiniButton>
                      <MiniButton aria-label="播放" $on><Mini d="M2.500 1V10.500H11M5.500 2.500V8.500L9 5.500ZM1 3H4" /></MiniButton>
                      <MiniButton aria-label="右移"><Mini d="M1.500 1.500H4.500V10.500H1.500ZM5 6H10.500M8 3.500 10.500 6 8 8.500" /></MiniButton>
                    </LegendTools>
                  </Legend>
                  <PricePlot />
                </Plot>
                <AxisColumn>
                  <PriceAxis $right>{prices.map((p) => <li key={p}>{p}</li>)}</PriceAxis>
                  <RiseMark><DoubleUp color={c.orange} /></RiseMark>
                  <PriceTag $top={81} $strong>1542.45</PriceTag>
                  <PriceTag $top={329}>1420.01</PriceTag>
                </AxisColumn>
              </Panel>

              <Panel $h={171}>
                <AxisColumn>
                  <AlertIcon aria-label="提醒"><SunIcon /></AlertIcon>
                  <RsiAxis>{levels.map((p) => <li key={p}>{p}</li>)}</RsiAxis>
                </AxisColumn>
                <Plot>
                  <Legend>
                    <LegendItem $w={72}>RSI(6,12,24)</LegendItem>
                    <LegendItem $w={68}>RSI1:95.05</LegendItem>
                    <LegendItem $w={68} $color={c.navy}>RSI2:83.71</LegendItem>
                    <LegendItem $color={c.pink}>RSI3:68.51</LegendItem>
                  </Legend>
                  <RsiPlot />
                </Plot>
                <AxisColumn>
                  <RsiAxis $right>{levels.map((p) => <li key={p}>{p}</li>)}</RsiAxis>
                </AxisColumn>
              </Panel>

              <DateRow>
                <PeriodButton>
                  日线
                  <svg width="9" height="8" viewBox="0 0 9 8"><path d="M4.500 0 9 8H0Z" fill={c.orange} /></svg>
                </PeriodButton>
                <DateAxis />
              </DateRow>
              <Indicators>
                <Indicator $w={40} $tone="on"><Han>指标</Han></Indicator>
                <Indicator $w={40} $tone="hot"><Han>模板</Han></Indicator>
                {indicators.map(([name, w]) => <Indicator key={name} $w={w}>{name}</Indicator>)}
                <Indicator $w={40}><Han>设置</Han></Indicator>
              </Indicators>
            </Charts>
          </Work>
          <Splitter>
            <Handle aria-label="展开资讯">
              <svg width="22" height="6" viewBox="0 0 22 6"><path d="M11 0 22 6H0Z" fill="#8f9094" /></svg>
            </Handle>
          </Splitter>
          <News>
            <NewsTab>资讯</NewsTab>
            <NewsTag>标签:黄金</NewsTag>
            <Expand>展开<DoubleUp color={c.ink} /></Expand>
          </News>
        </Left>

        <Quote>
          <QuoteActions>
            <QuoteAction>加入自选</QuoteAction>
            <QuoteAction>价格预警</QuoteAction>
          </QuoteActions>
          <Instrument>XAU<InstrumentName>现货黄金</InstrumentName></Instrument>
          <Facts $h={49} $pad={0}>
            {[['卖出', '1542.60'], ['买入', '1542.30']].map(([name, value]) => (
              <FactRow key={name}>
                <FactLabel>{name}</FactLabel>
                <FactValue $color={c.red}>{value}</FactValue>
                <MidDash><Dash>—</Dash></MidDash>
              </FactRow>
            ))}
          </Facts>
          <Facts $h={228} $pad={1}>
            {facts.map(([a, b]) => (
              <FactRow key={a[0]}>
                <FactLabel>{a[0]}</FactLabel>
                <FactValue $color={a[2]}><Value text={a[1]} /></FactValue>
                <FactLabel $second>{b[0]}</FactLabel>
                <FactValue $color={b[2]}><Value text={b[1]} /></FactValue>
              </FactRow>
            ))}
          </Facts>
          <Ticks>
            <thead>
              <tr>
                <TickHead $w={85} $pad={0}>时间</TickHead>
                <TickHead $w={85} $pad={27}>价格</TickHead>
                <TickHead $w={81} $pad={54}>涨跌</TickHead>
              </tr>
            </thead>
            <tbody>
              {ticks.map(([time, price, change], i) => (
                <tr key={i}>
                  <TickCell><TickTime $main={time.length > 3}>{time}</TickTime></TickCell>
                  <TickCell><TickValue $side="l" $hot={i === 9}>{price}</TickValue></TickCell>
                  <TickCell><TickValue $side="r" $hot={i === 9}>{change}<UpArrow /></TickValue></TickCell>
                </tr>
              ))}
            </tbody>
          </Ticks>
          <QuoteFoot><PenTab>笔</PenTab></QuoteFoot>
          <Watermark>
            <SwirlIcon size={30} a="#e8894a" b="#3f62b0" />
            <MarkLatin>FX678</MarkLatin>
            <MarkHan>汇通网</MarkHan>
          </Watermark>
        </Quote>
      </Body>

      <Status>
        {indices.map(([name, price, change, pct, up]) => (
          <Index key={name}>
            <IndexName>{name}</IndexName>
            <IndexValue $up={up}>{price}</IndexValue>
            <IndexValue $up={up}>{change}<Trend up={up} /></IndexValue>
            <IndexValue $up={up}>{pct}</IndexValue>
          </Index>
        ))}
        <Search aria-label="搜索" placeholder="名称/代码/指标" />
        <StatusTail>
          <Bell />
          <Signal><Bars /></Signal>
          <Clock>13:53:08</Clock>
        </StatusTail>
      </Status>
    </Shell>
  );
}
